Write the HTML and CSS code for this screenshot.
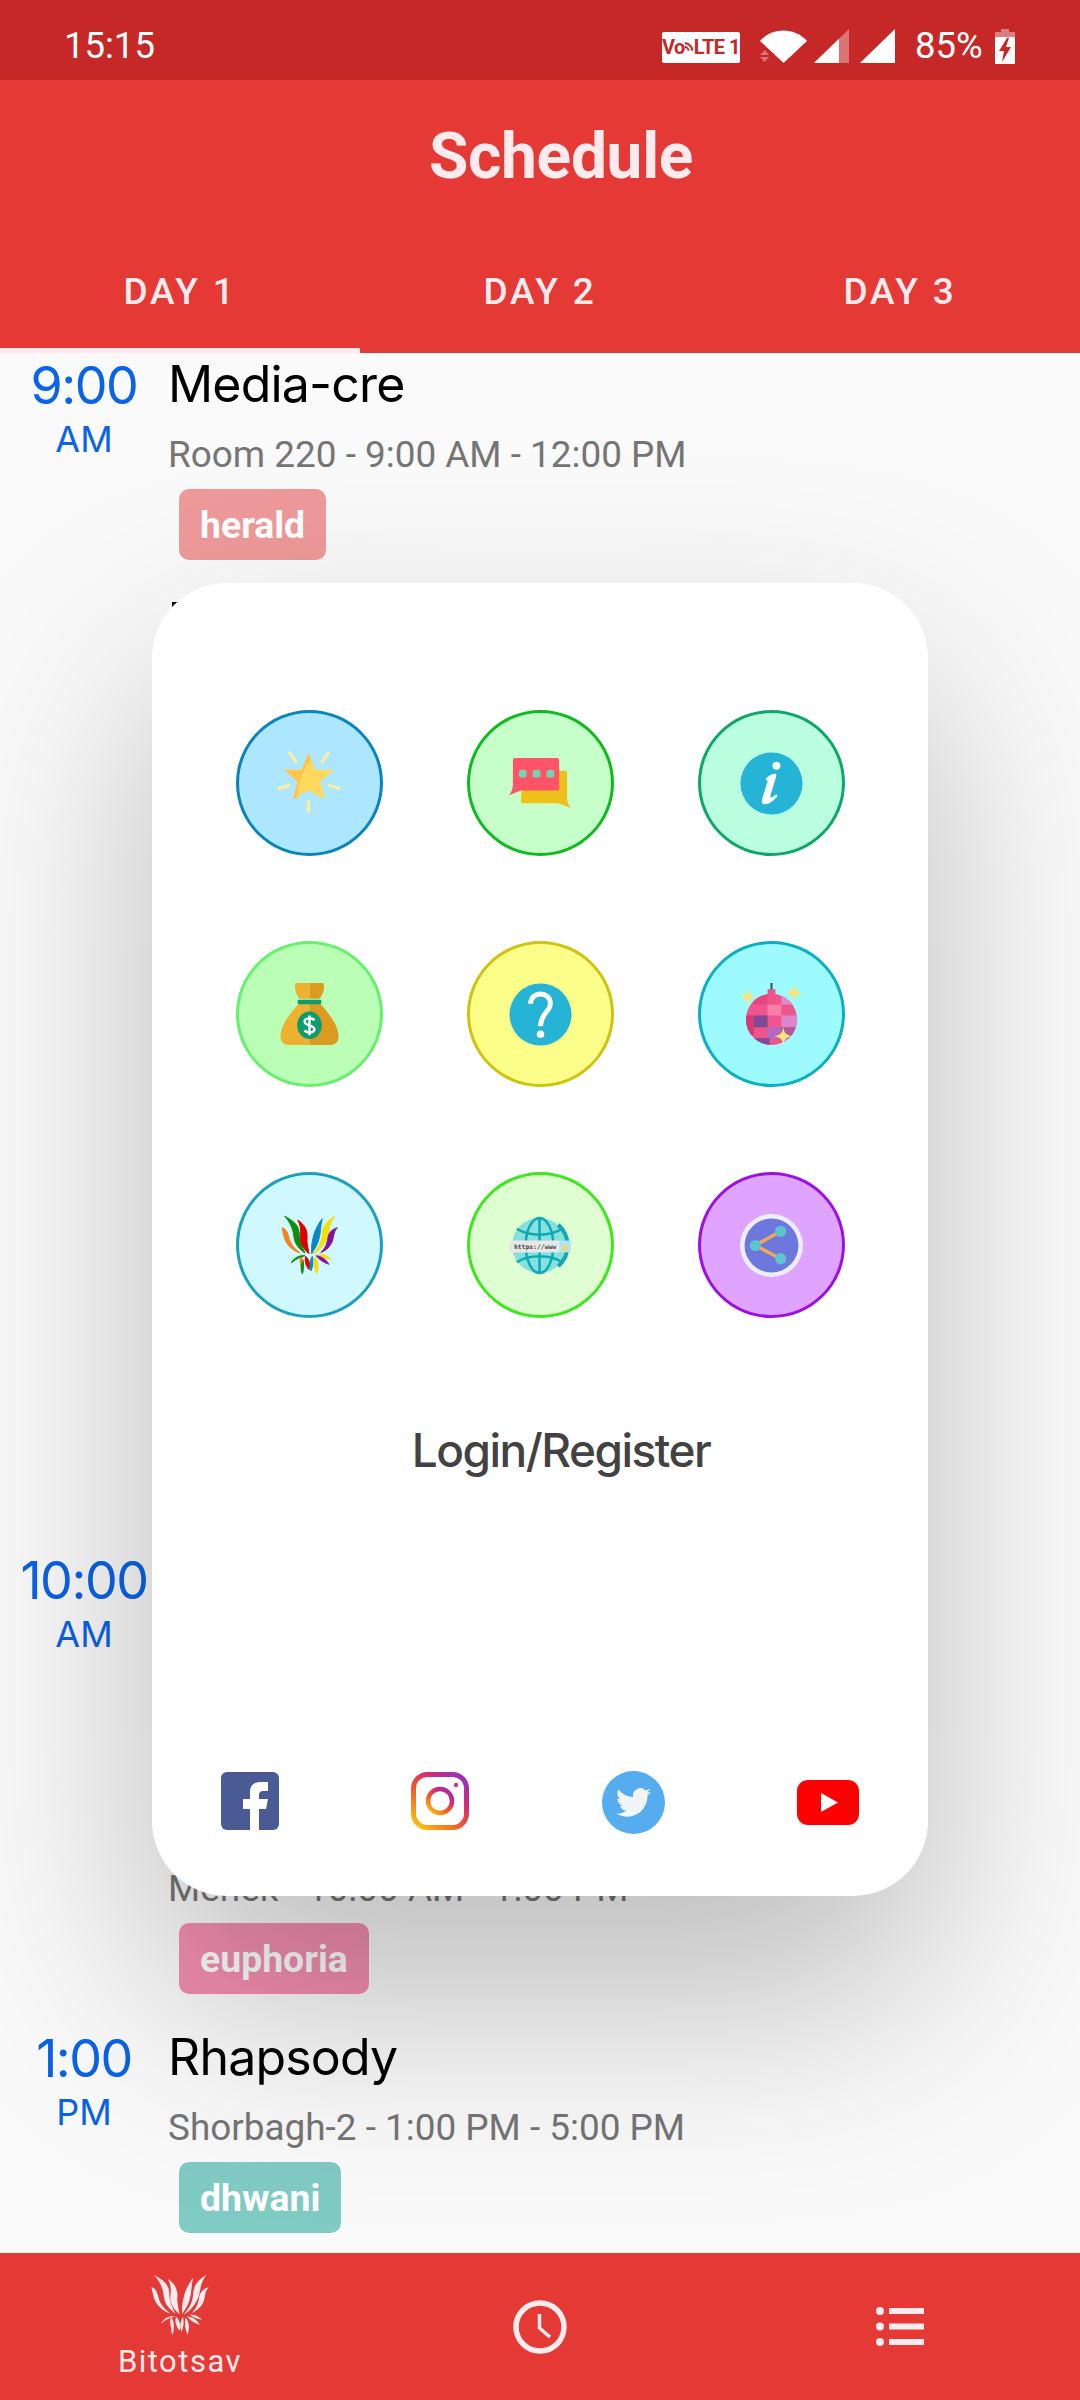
FILE: index.html
```html
<!DOCTYPE html>
<html lang="en">
<head>
<meta charset="utf-8">
<title>Schedule</title>
<link rel="stylesheet" href="styles.css">
</head>
<body>
<div class="app">
  <div class="status">
    <span class="clock-text">15:15</span>
    <div class="status-icons">
      <span class="volte"><span>Vo</span><svg class="volte-arc" viewBox="0 0 12 16"><path d="M1 10a5 5 0 0 1 5 5M1 5a10 10 0 0 1 10 10" fill="none" stroke="#c62828" stroke-width="2.6"/></svg><span>LTE 1</span></span>
      <svg class="wifi" viewBox="0 0 47 33"><path d="M0 11C12-3 35-3 47 11L23.500 33Z" fill="#fff"/><path d="M5 20h-0L0 25h9ZM0 27h9l-4.500 5Z" fill="#fff" opacity=".35"/></svg>
      <svg class="signal" viewBox="0 0 35 34"><path d="M0 34 35 0v34Z" fill="#fff" opacity=".35"/><path d="M0 34 25 9.700V34Z" fill="#fff"/></svg>
      <svg class="signal" viewBox="0 0 35 34"><path d="M0 34 35 0v34Z" fill="#fff"/></svg>
      <span class="pct">85%</span>
      <svg class="battery" viewBox="0 0 20 35"><path d="M6 0h8v3h6v5H0V3h6Z" fill="#fff" opacity=".4"/><path d="M0 8h20v27H0Z" fill="#fff"/><path d="M12 9 4 22h5l-2 11 9-15h-5l3-9Z" fill="#c62828"/></svg>
    </div>
  </div>
  <header class="appbar">
    <div class="toolbar"><h1 class="title">Schedule</h1></div>
    <div class="tabs">
      <div class="tab tab-active">DAY 1</div>
      <div class="tab">DAY 2</div>
      <div class="tab">DAY 3</div>
    </div>
  </header>
  <main class="main">
    <div class="list">
      <div class="row">
        <div class="time"><div class="hour">9:00</div><div class="ampm">AM</div></div>
        <div class="info"><div class="name">Media-cre</div><div class="room">Room 220 - 9:00 AM - 12:00 PM</div><span class="tag tag-herald">herald</span></div>
      </div>
      <div class="row">
        <div class="time"></div>
        <div class="info"><div class="name"><span class="peek"></span></div></div>
      </div>
      <div class="row"></div>
      <div class="row"></div>
      <div class="row"></div>
      <div class="row">
        <div class="time"><div class="hour">10:00</div><div class="ampm">AM</div></div>
      </div>
      <div class="row">
        <div class="time"></div>
        <div class="info"><div class="name"></div><div class="room">Menek - 10:00 AM - 1:00 PM</div><span class="tag tag-euphoria">euphoria</span></div>
      </div>
      <div class="row">
        <div class="time"><div class="hour">1:00</div><div class="ampm">PM</div></div>
        <div class="info"><div class="name">Rhapsody</div><div class="room">Shorbagh-2 - 1:00 PM - 5:00 PM</div><span class="tag tag-dhwani">dhwani</span></div>
      </div>
    </div>

    <div class="modal">
      <div class="grid">
        <div class="bubble b-blue">
          <svg class="ico" viewBox="0 0 64 64"><g stroke="#fbee9e" stroke-width="3.200" stroke-linecap="round"><path d="M12 1l6 9M51 1l-6 9M1 37l10-3M62 37l-10-3M31 50v10"/></g><path d="M31 1 38 18H57L43 30 48 48 31 39 15 48 20 30 6 18H24Z" fill="#ffd95c"/><path d="M31 1 24 18H6L20 30 15 48 20 46C20 30 26 16 34 8Z" fill="#ffc44d"/></svg>
        </div>
        <div class="bubble b-green">
          <svg class="ico" viewBox="0 0 64 64"><path d="M14 19H57a2 2 0 0 1 2 2V46C59 50 60 54 63 57L50 52H14a2 2 0 0 1-2-2Z" fill="#f0c01a"/><path d="M6 6H49a2 2 0 0 1 2 2V37a2 2 0 0 1-2 2H12L0 44C3 40 4 37 4 32V8a2 2 0 0 1 2-2Z" fill="#ff5468"/><g fill="#76d2b4"><rect x="10" y="18" width="8" height="8" rx="3"/><rect x="24" y="18" width="8" height="8" rx="3"/><rect x="38" y="18" width="8" height="8" rx="3"/></g></svg>
        </div>
        <div class="bubble b-mint">
          <svg class="ico" viewBox="0 0 64 64"><circle cx="32" cy="32" r="31.500" fill="#26b4d6"/><circle cx="37" cy="14" r="4" fill="#fff"/><path d="M26 27C29 24 33 22 36 22 37 22 37 24 36.500 26L31 44C30.500 47 32 47 37 43L38 45C34 50 28 54 24 53 21.500 52.500 22 49 23 46L28 30C28 28 27 29 27 29Z" fill="#fff"/></svg>
        </div>
        <div class="bubble b-lime">
          <svg class="ico" viewBox="0 0 64 64"><path d="M18 0H32V16H22C18 12 16 3 18 0Z" fill="#edb02f"/><path d="M32 0H46C48 3 46 12 42 16H32Z" fill="#dc9a20"/><path d="M21 21H32V63H12C5 63 1 59 3 50 5 40 13 30 21 21Z" fill="#edb02f"/><path d="M43 21H32V63H52C59 63 63 59 61 50 59 40 51 30 43 21Z" fill="#dc9a20"/><rect x="20" y="17" width="24" height="4.500" rx="1.500" fill="#0e9b6e"/><ellipse cx="32" cy="43" rx="12.500" ry="14" fill="#0e9b6e"/><path d="M37 38C35 35 27 35 27 39 27 44 37 42 37 47 37 51 29 51 27 48M32 33V53" fill="none" stroke="#fff" stroke-width="2.400"/></svg>
        </div>
        <div class="bubble b-yellow">
          <svg class="ico" viewBox="0 0 64 64"><circle cx="32" cy="32" r="31.500" fill="#26b4d6"/><path d="M22 21C22 8 42 8 42 21 42 29 32 31 32 44" fill="none" stroke="#fff" stroke-width="5"/><circle cx="32" cy="52" r="3.800" fill="#fff"/></svg>
        </div>
        <div class="bubble b-cyan">
          <svg class="ico" viewBox="0 0 64 64"><defs><clipPath id="ball"><circle cx="32" cy="37" r="26"/></clipPath></defs><path d="M32 0v7" stroke="#37474f" stroke-width="2"/><rect x="28" y="6" width="8" height="7" rx="1.500" fill="#f0548c"/><g clip-path="url(#ball)"><rect x="6" y="11" width="52" height="52" fill="#f0548c"/><rect x="14" y="11" width="14" height="11" fill="#e8457e"/><rect x="28" y="22" width="14" height="11" fill="#f97fa8"/><rect x="42" y="11" width="14" height="11" fill="#e487c4"/><rect x="14" y="33" width="14" height="12" fill="#7e4a94"/><rect x="42" y="33" width="18" height="12" fill="#de84cc"/><rect x="28" y="45" width="14" height="12" fill="#b06bbe"/><rect x="14" y="56" width="16" height="8" fill="#7e4a94"/><rect x="6" y="33" width="8" height="20" fill="#d23c72"/><rect x="42" y="45" width="18" height="12" fill="#b2589e"/></g><path d="M8 5C9 11 11 13 17 14 11 15 9 17 8 23 7 17 5 15-1 14 5 13 7 11 8 5Z" fill="#fbe57f"/><path d="M55 1C56 7 58 9 64 10 58 11 56 13 55 19 54 13 52 11 46 10 52 9 54 7 55 1Z" fill="#fbe57f"/><path d="M44 45C45 51 47 53 53 54 47 55 45 57 44 63 43 57 41 55 35 54 41 53 43 51 44 45Z" fill="#fbe57f"/></svg>
        </div>
        <div class="bubble b-pale">
          <svg class="ico-logo" viewBox="0 0 170 175"><path class="f-o" d="M0 35C12 38 18 50 22 70 28 88 40 100 55 112 35 106 15 90 8 68 4 55 2 45 0 35Z"/><path class="f-g" d="M8 0C28 12 50 22 52 50 52 72 58 90 70 112 52 100 38 84 36 60 34 38 24 18 8 0Z"/><path class="f-r" d="M48 12C68 24 78 44 76 64 74 82 80 98 82 114 66 100 52 82 56 58 58 40 56 26 48 12Z"/><path class="f-b" d="M122 8C116 30 118 50 112 70 108 88 98 100 90 114 88 92 92 72 98 52 104 36 112 20 122 8Z"/><path class="f-y" d="M160 0C150 14 144 28 142 46 138 72 122 100 94 116 112 96 122 76 122 52 124 28 140 12 160 0Z"/><path class="f-p" d="M168 35C158 44 158 56 154 72 148 92 134 104 118 110 132 98 138 80 140 62 144 48 152 40 168 35Z"/><path class="f-o" d="M58 120C62 130 68 140 62 165 56 150 52 135 58 120Z"/><path class="f-g" d="M28 142C38 124 56 118 70 120 52 124 40 132 28 142Z"/><path class="f-r" d="M72 122C84 134 86 148 82 162 72 150 68 136 72 122Z"/><path class="f-b" d="M92 122C96 138 94 152 88 166 82 152 84 136 92 122Z"/><path class="f-y" d="M100 124C110 138 112 150 106 175 98 160 96 140 100 124Z"/><path class="f-p" d="M104 120C122 122 134 132 142 146 126 140 112 132 104 120Z"/><path class="f-g" d="M64 135C66 150 66 162 62 175 56 165 58 148 64 135Z"/><path class="f-y" d="M112 116C124 114 138 120 148 130 134 128 122 124 112 116Z"/></svg>
        </div>
        <div class="bubble b-lgreen">
          <svg class="ico" viewBox="0 -3 64 64"><circle cx="31" cy="29" r="28" fill="#86e0de"/><g fill="none" stroke="#0fa9b4" stroke-width="2.600"><ellipse cx="31" cy="29" rx="14" ry="28"/><path d="M31 1V57M8 12C20 20 42 20 54 12M8 46C20 38 42 38 54 46"/><path d="M50 8A28 28 0 0 1 50 50" stroke-width="4"/></g><rect x="0" y="24" width="52" height="12" rx="2" fill="#e8e8e8"/><rect x="51" y="24" width="12" height="12" fill="#aee6f5"/><text class="url" x="5" y="33">https://www</text><path d="M57 26.500 58.300 29.800 61.500 30 59 32 60 35.500 57 33.500 54 35.500 55 32 52.500 30 55.700 29.800Z" fill="#f9d568"/></svg>
        </div>
        <div class="bubble b-purple">
          <svg class="ico" viewBox="0 0 62 62"><circle cx="31" cy="31" r="31" fill="#eeeef8"/><circle cx="31" cy="31" r="26.500" fill="#6e78dc"/><path d="M40 17 15 31 40 44" fill="none" stroke="#f0a856" stroke-width="3.400"/><circle cx="40" cy="17" r="5.500" fill="#5cc4d0"/><circle cx="15" cy="31" r="5.500" fill="#5cc4d0"/><circle cx="40" cy="44" r="5.500" fill="#5cc4d0"/></svg>
        </div>
      </div>
      <div class="login">Login/Register</div>
      <div class="social">
        <svg class="s-fb" viewBox="0 0 58 58"><rect width="58" height="58" rx="6" fill="#4a5a94"/><path d="M29 58V37H22V27H29V20C29 13 33 10 40 10H47V19H42C39 19 38 21 38 23V27H47L45 37H38V58Z" fill="#fff"/></svg>
        <svg class="s-ig" viewBox="0 0 58 58"><defs><linearGradient id="ig" x1="0.100" y1="1" x2="0.900" y2="0"><stop offset="0" stop-color="#fdc010"/><stop offset=".4" stop-color="#f0592b"/><stop offset=".7" stop-color="#d62976"/><stop offset="1" stop-color="#962fbf"/></linearGradient></defs><rect x="2.500" y="2.500" width="53" height="53" rx="14" fill="none" stroke="url(#ig)" stroke-width="5"/><circle cx="29" cy="29" r="12" fill="none" stroke="url(#ig)" stroke-width="4.500"/><circle cx="45" cy="13" r="2.200" fill="#c8388e"/></svg>
        <svg class="s-tw" viewBox="0 0 63 63"><circle cx="31.500" cy="31.500" r="31.500" fill="#55acee"/><path transform="translate(14 14) scale(1.460)" fill="#f1f5f5" d="M23.953 4.570a10 10 0 0 1-2.825.775 4.958 4.958 0 0 0 2.163-2.723c-.951.555-2.005.959-3.127 1.184a4.920 4.920 0 0 0-8.384 4.482C7.690 8.095 4.067 6.130 1.640 3.162a4.822 4.822 0 0 0-.666 2.475c0 1.710.870 3.213 2.188 4.096a4.904 4.904 0 0 1-2.228-.616v.060a4.923 4.923 0 0 0 3.946 4.827 4.996 4.996 0 0 1-2.212.085 4.936 4.936 0 0 0 4.604 3.417 9.867 9.867 0 0 1-6.102 2.105c-.390 0-.779-.023-1.170-.067a13.995 13.995 0 0 0 7.557 2.209c9.053 0 13.998-7.496 13.998-13.985 0-.210 0-.420-.015-.630A9.935 9.935 0 0 0 24 4.590z"/></svg>
        <svg class="s-yt" viewBox="0 0 62 45"><rect width="62" height="45" rx="11" fill="#f00"/><path d="M24 13V32L41 22.500Z" fill="#fff"/></svg>
      </div>
    </div>
  </main>
  <nav class="nav">
    <div class="nav-item">
      <svg class="logo-white" viewBox="0 0 170 175"><path d="M0 35C12 38 18 50 22 70 28 88 40 100 55 112 35 106 15 90 8 68 4 55 2 45 0 35Z"/><path d="M8 0C28 12 50 22 52 50 52 72 58 90 70 112 52 100 38 84 36 60 34 38 24 18 8 0Z"/><path d="M48 12C68 24 78 44 76 64 74 82 80 98 82 114 66 100 52 82 56 58 58 40 56 26 48 12Z"/><path d="M122 8C116 30 118 50 112 70 108 88 98 100 90 114 88 92 92 72 98 52 104 36 112 20 122 8Z"/><path d="M160 0C150 14 144 28 142 46 138 72 122 100 94 116 112 96 122 76 122 52 124 28 140 12 160 0Z"/><path d="M168 35C158 44 158 56 154 72 148 92 134 104 118 110 132 98 138 80 140 62 144 48 152 40 168 35Z"/><path d="M58 120C62 130 68 140 62 165 56 150 52 135 58 120Z"/><path d="M28 142C38 124 56 118 70 120 52 124 40 132 28 142Z"/><path d="M72 122C84 134 86 148 82 162 72 150 68 136 72 122Z"/><path d="M92 122C96 138 94 152 88 166 82 152 84 136 92 122Z"/><path d="M100 124C110 138 112 150 106 175 98 160 96 140 100 124Z"/><path d="M104 120C122 122 134 132 142 146 126 140 112 132 104 120Z"/><path d="M64 135C66 150 66 162 62 175 56 165 58 148 64 135Z"/><path d="M112 116C124 114 138 120 148 130 134 128 122 124 112 116Z"/></svg>
      <span class="nav-label">Bitotsav</span>
    </div>
    <div class="nav-item">
      <svg class="nav-clock" viewBox="0 0 54 54"><circle cx="27" cy="27" r="24" fill="none" stroke="#ffebee" stroke-width="5.500"/><path d="M26.500 14V28L37 37" fill="none" stroke="#ffebee" stroke-width="3.500"/></svg>
    </div>
    <div class="nav-item">
      <svg class="nav-list" viewBox="0 0 48 39"><g fill="#ffebee"><circle cx="4" cy="4" r="4"/><circle cx="4" cy="19.500" r="4"/><circle cx="4" cy="35" r="4"/><rect x="13" y="1" width="35" height="6"/><rect x="13" y="16.500" width="35" height="6"/><rect x="13" y="32" width="35" height="6"/></g></svg>
    </div>
  </nav>
</div>
</body>
</html>
```
FILE: styles.css
```css
* { box-sizing: border-box; }
html, body { margin: 0; padding: 0; }
body { font-family: Roboto, "Liberation Sans", sans-serif; background: #fafafa; }
.app { width: 1080px; height: 2400px; display: flex; flex-direction: column; overflow: hidden; }

.status { height: 80px; flex: none; background: #c62828; color: #fff; display: flex; align-items: center; justify-content: space-between; padding: 0 65px 0 64px; }
.clock-text { font-size: 36.500px; line-height: 1; padding-top: 12px; }
.status-icons { display: flex; align-items: center; padding-top: 12px; }
.volte { width: 78px; height: 31px; background: #fff; border-radius: 2px; color: #c62828; font: 700 20px/31px Roboto, sans-serif; display: flex; align-items: center; justify-content: center; margin: 3px 20px 0 0; letter-spacing: -0.5px; white-space: nowrap; }
.volte-arc { width: 9px; height: 13px; flex: none; margin: -4px 1px 0 -1px; }
.wifi { width: 47px; height: 33px; margin-right: 7px; }
.signal { width: 35px; height: 34px; margin-right: 11px; }
.pct { width: 67px; margin: 0 13px 0 9px; font-size: 36.500px; line-height: 40px; white-space: nowrap; }
.battery { width: 20px; height: 35px; }

.appbar { flex: none; height: 273px; background: #e53935; color: #ffebee; }
.toolbar { height: 147px; display: flex; align-items: center; justify-content: center; padding: 6px 0 0 42px; }
.title { margin: 0; font-size: 64px; font-weight: 700; line-height: 1; letter-spacing: -0.3px; }
.tabs { height: 126px; display: flex; }
.tab { flex: 1; display: flex; align-items: center; justify-content: center; font-size: 37px; font-weight: 500; letter-spacing: 2.800px; border-bottom: 5px solid transparent; padding-top: 7px; }
.tab-active { border-bottom-color: #ffebee; }

.main { flex: 1; position: relative; overflow: hidden; background: #fafafa; }
.row { height: 239px; display: flex; }
.time { width: 168px; flex: none; text-align: center; color: #0a63e8; font-family: Inter, sans-serif; }
.hour { font-size: 52px; line-height: 64px; letter-spacing: -1.500px; padding-top: 1px; margin-bottom: -1px; }
.ampm { font-size: 36px; line-height: 44px; }
.info { flex: 1; }
.name { height: 64px; font-family: Inter, sans-serif; font-size: 50px; line-height: 62px; color: #000; letter-spacing: -0.800px; }
.peek { display: block; width: 12px; height: 12px; background: #000; position: relative; top: 10px; left: 4px; }
.room { margin-top: 16px; font-size: 36.900px; line-height: 44px; color: #757575; }
.tag { display: inline-block; height: 71px; margin: 12px 0 0 11px; padding: 2px 21px 0; border-radius: 10px; color: #fff; font-size: 37.400px; font-weight: 700; line-height: 69px; }
.tag-herald { background: #ef9a9a; }
.tag-euphoria { background: #f48fb1; }
.tag-dhwani { background: #80cbc4; }

.modal { position: absolute; left: 152px; top: 230px; width: 776px; height: 1313px; background: #fff; border-radius: 75px; box-shadow: 0 100px 220px rgba(0, 0, 0, .25); display: flex; flex-direction: column; padding-top: 127px; }
.grid { display: grid; grid-template-columns: repeat(3, 147px); grid-auto-rows: 146px; column-gap: 84px; row-gap: 85px; padding-left: 84px; }
.bubble { border: 3px solid; border-radius: 50%; display: flex; align-items: center; justify-content: center; }
.ico { width: 63px; height: 63px; overflow: visible; }
.ico-logo { width: 56px; height: 58px; overflow: visible; }
.b-blue { background: #ade7ff; border-color: #0a84bd; }
.b-green { background: #c6ffc9; border-color: #0dbb1e; }
.b-mint { background: #baffe0; border-color: #0da868; }
.b-lime { background: #baffb5; border-color: #66f06e; }
.b-yellow { background: #fbff8a; border-color: #cec30f; }
.b-cyan { background: #9dfbff; border-color: #08b0c0; }
.b-pale { background: #cff8ff; border-color: #1ba0bc; }
.b-lgreen { background: #dfffd3; border-color: #3ce81b; }
.b-purple { background: #dfa4ff; border-color: #9b10e4; }
.f-o { fill: #f58220; stroke: #f58220; stroke-width: 3px; }
.f-g { fill: #0a8f0a; stroke: #0a8f0a; stroke-width: 3px; }
.f-r { fill: #e00000; stroke: #e00000; stroke-width: 3px; }
.f-b { fill: #0d86c8; stroke: #0d86c8; stroke-width: 3px; }
.f-y { fill: #f5e000; stroke: #f5e000; stroke-width: 3px; }
.f-p { fill: #8a0f9a; stroke: #8a0f9a; stroke-width: 3px; }
.url { font: 700 6.500px "DejaVu Sans Mono", monospace; fill: #444; }
.login { margin-top: 102px; padding-left: 42px; text-align: center; font-family: Inter, sans-serif; font-size: 46px; line-height: 60px; font-weight: 500; color: #424242; letter-spacing: -1.500px; }
.social { margin-top: 291px; display: flex; justify-content: space-between; align-items: center; height: 63px; padding: 0 69px; }
.s-fb, .s-ig { width: 58px; height: 58px; margin-top: -4px; }
.s-tw { width: 63px; height: 63px; }
.s-yt { width: 62px; height: 45px; }

.nav { flex: none; height: 147px; background: #e53935; color: #ffebee; display: flex; }
.nav-item { flex: 1; display: flex; flex-direction: column; align-items: center; justify-content: center; }
.logo-white { width: 59px; height: 60px; fill: #ffebee; }
.nav-label { font-size: 31px; line-height: 44px; letter-spacing: 1.500px; padding-top: 5px; margin-bottom: -5px; }
.nav-clock { width: 54px; height: 54px; }
.nav-list { width: 48px; height: 39px; margin-top: -1px; }
```
